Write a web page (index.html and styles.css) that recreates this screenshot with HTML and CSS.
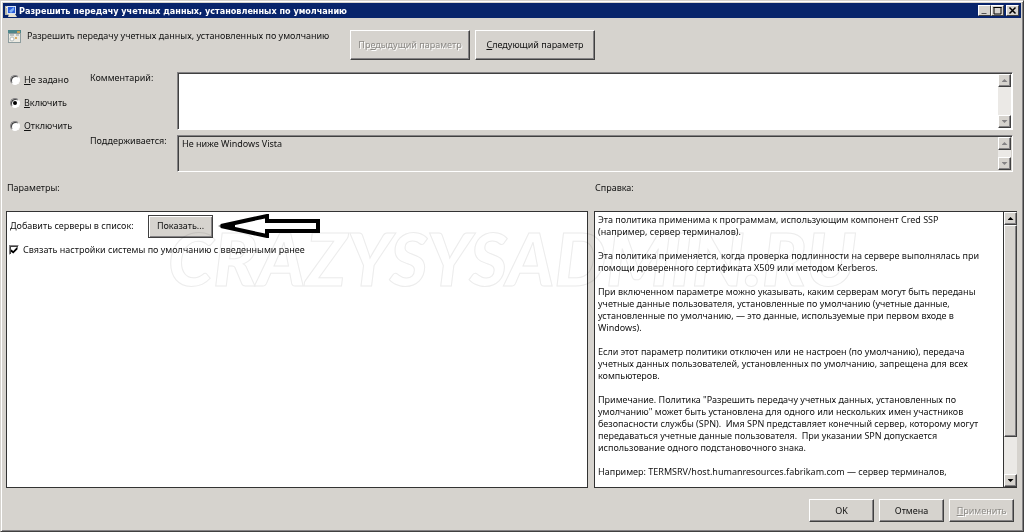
FILE: index.html
```
<!DOCTYPE html>
<html lang="ru">
<head>
    <meta charset="UTF-8">
    <meta name="viewport" content="width=device-width, initial-scale=1.0">
    <title>Разрешить передачу учетных данных, установленных по умолчанию</title>
    <link rel="stylesheet" href="styles.css">
</head>
<body>
    <div class="window">
        <header class="title-bar">
            <svg class="title-icon" viewBox="0 0 12 12" aria-hidden="true">
                <rect x="0" y="1" width="4" height="9" fill="#b9b7a8"/>
                <rect x="1" y="2" width="2" height="1" fill="#f4f2e4"/>
                <rect x="2" y="1" width="9" height="8" fill="#d8e4f4"/>
                <rect x="3" y="2" width="7" height="6" fill="#2a5bd8"/>
                <path d="M4 6 9 2v3L6 8z" fill="#7fb0f5"/>
                <path d="M4 9h6l2 3H3z" fill="#e6e2d2"/>
            </svg>
            <h1 class="title-text">Разрешить передачу учетных данных, установленных по умолчанию</h1>
            <div class="title-buttons">
                <button class="title-btn" aria-label="Свернуть"><svg viewBox="0 0 10 9"><path d="M2 7.500h5" stroke="#555"/></svg></button>
                <button class="title-btn" aria-label="Развернуть"><svg viewBox="0 0 10 9"><path d="M1 1.500h8M1.500 1v7h7V1" fill="none" stroke="#000"/></svg></button>
                <button class="title-btn close" aria-label="Закрыть"><svg viewBox="0 0 10 9"><path d="M2 1.500l6 6M8 1.500l-6 6" stroke="#000" stroke-width="1.500"/></svg></button>
            </div>
        </header>

        <section class="policy-head">
            <svg class="policy-icon" viewBox="0 0 13 13" aria-hidden="true">
                <rect x="0" y="0" width="13" height="13" fill="#8d9c9e"/>
                <rect x="0" y="0" width="13" height="3" fill="#4d868a"/>
                <rect x="9" y="1" width="3" height="2" fill="#c8a45c"/>
                <rect x="1" y="4" width="11" height="8" fill="#eceae2"/>
                <path d="M2 5h4M8 5h3" stroke="#8b9aa0"/>
                <circle cx="4" cy="9" r="2" fill="#fff" stroke="#b5bcbc"/>
                <circle cx="8" cy="8" r="1" fill="#d59a3c"/>
            </svg>
            <p class="policy-name">Разрешить передачу учетных данных, установленных по умолчанию</p>
            <button class="btn btn-nav" disabled>Пр<u>е</u>дыдущий параметр</button>
            <button class="btn btn-nav"><u>С</u>ледующий параметр</button>
        </section>

        <section class="policy-state">
            <div class="radios">
                <label class="option"><input type="radio" name="state"><span><u>Н</u>е задано</span></label>
                <label class="option"><input type="radio" name="state" checked><span><u>В</u>ключить</span></label>
                <label class="option"><input type="radio" name="state"><span><u>О</u>тключить</span></label>
            </div>
            <div class="fields">
                <label for="comment">Комментарий:</label>
                <div class="field comment">
                    <textarea id="comment"></textarea>
                    <div class="scroll off">
                        <button class="scroll-btn" aria-label="Вверх"><span class="up"></span></button>
                        <button class="scroll-btn" aria-label="Вниз"><span class="down"></span></button>
                    </div>
                </div>
                <label for="supported">Поддерживается:</label>
                <div class="field supported">
                    <textarea id="supported" readonly>Не ниже Windows Vista</textarea>
                    <div class="scroll off">
                        <button class="scroll-btn" aria-label="Вверх"><span class="up"></span></button>
                        <button class="scroll-btn" aria-label="Вниз"><span class="down"></span></button>
                    </div>
                </div>
            </div>
        </section>

        <main class="panels">
            <h2 class="panel-title">Параметры:</h2>
            <h2 class="panel-title">Справка:</h2>
            <section class="panel params">
                <div class="param-row">
                    <span>Добавить серверы в список:</span>
                    <button class="btn btn-show">Показать...</button>
                    <svg class="arrow" viewBox="0 0 104 24" aria-hidden="true">
                        <path d="M4 12 50 2v5h51v10H50v5z" fill="#fff" stroke="#000" stroke-width="4"/>
                        <path d="M1 12 18 8v8z"/>
                    </svg>
                </div>
                <label class="option"><input type="checkbox" checked><span>Связать настройки системы по умолчанию с введенными ранее</span></label>
            </section>
            <section class="panel help">
                <div class="help-text">
                    <p>Эта политика применима к программам, использующим компонент Cred SSP<br>(например, сервер терминалов).</p>
                    <p>Эта политика применяется, когда проверка подлинности на сервере выполнялась при<br>помощи доверенного сертификата X509 или методом Kerberos.</p>
                    <p>При включенном параметре можно указывать, каким серверам могут быть переданы<br>учетные данные пользователя, установленные по умолчанию (учетные данные,<br>установленные по умолчанию, — это данные, используемые при первом входе в<br>Windows).</p>
                    <p>Если этот параметр политики отключен или не настроен (по умолчанию), передача<br>учетных данных пользователей, установленных по умолчанию, запрещена для всех<br>компьютеров.</p>
                    <p>Примечание. Политика "Разрешить передачу учетных данных, установленных по<br>умолчанию" может быть установлена для одного или нескольких имен участников<br>безопасности службы (SPN).&nbsp; Имя SPN представляет конечный сервер, которому могут<br>передаваться учетные данные пользователя.&nbsp; При указании SPN допускается<br>использование одного подстановочного знака.</p>
                    <p>Например: TERMSRV/host.humanresources.fabrikam.com — сервер терминалов,</p>
                </div>
                <div class="scroll">
                    <button class="scroll-btn" aria-label="Вверх"><span class="up"></span></button>
                    <div class="thumb"></div>
                    <button class="scroll-btn" aria-label="Вниз"><span class="down"></span></button>
                </div>
            </section>
            <div class="watermark" aria-hidden="true">CRAZYSYSADMIN.RU</div>
        </main>

        <footer class="actions">
            <button class="btn">OK</button>
            <button class="btn">Отмена</button>
            <button class="btn" disabled><u>П</u>рименить</button>
        </footer>
    </div>
</body>
</html>
```
FILE: styles.css
```
* {
    box-sizing: border-box;
}

body {
    margin: 0;
    background: #d6d3ce;
    color: #111;
    font: 9px/12px "Noto Sans", "Open Sans", sans-serif;
}

h1, h2, p {
    margin: 0;
    font-size: inherit;
    font-weight: normal;
}

button, textarea, input {
    margin: 0;
    font: inherit;
    color: inherit;
}

.window {
    display: flex;
    flex-direction: column;
    min-height: 100vh;
    padding: 1px;
    border: 1px solid;
    border-color: #d6d3ce #404040 #404040 #d6d3ce;
    box-shadow: inset 1px 1px #fff, inset -1px -1px #848284;
}

/* Заголовок окна */
.title-bar {
    display: flex;
    align-items: center;
    height: 15px;
    margin: 1px 1px 0;
    padding: 0 2px;
    background: #08246b;
    color: #fff;
}

.title-icon {
    width: 12px;
    height: 12px;
    margin-right: 2px;
}

.title-text {
    flex: 1;
    font-family: "DejaVu Sans Condensed", "DejaVu Sans", sans-serif;
    font-weight: bold;
}

.title-buttons {
    display: flex;
}

.title-btn {
    width: 13px;
    height: 11px;
    padding: 0;
    display: flex;
    background: #d6d3ce;
    border: 1px solid;
    border-color: #fff #404040 #404040 #fff;
}

.title-btn svg {
    width: 100%;
    height: 100%;
}

.title-btn.close {
    margin-left: 2px;
}

/* Кнопки */
.btn {
    width: 65px;
    height: 23px;
    padding: 0;
    background: #d6d3ce;
    border: 1px solid;
    border-color: #fff #404040 #404040 #fff;
    box-shadow: inset -1px -1px #848284;
}

.btn:disabled {
    color: #8c8a86;
    text-shadow: 1px 1px #fff;
}

.btn-nav {
    width: 120px;
    height: 30px;
    margin-right: 5px;
}

.btn-show {
    border-color: #404040;
    box-shadow: inset 1px 1px #fff, inset -1px -1px #848284;
}

.policy-head {
    display: flex;
    align-items: flex-start;
    padding: 12px 6px;
}

.policy-icon {
    width: 13px;
    height: 13px;
    margin-right: 6px;
}

.policy-name {
    width: 323px;
    white-space: nowrap;
}

/* Состояние политики */
.policy-state {
    display: flex;
    padding: 0 9px 0 8px;
}

.radios {
    display: flex;
    flex-direction: column;
    gap: 11px;
    width: 80px;
    padding-top: 2px;
}

.option {
    display: flex;
    align-items: center;
    gap: 4px;
}

.option input {
    appearance: none;
    display: grid;
    place-items: center;
    width: 10px;
    height: 10px;
    background: #fff;
    border: 1px solid;
    border-color: #848284 #fff #fff #848284;
    box-shadow: inset 1px 1px #404040;
}

.option input[type="radio"] {
    border-radius: 50%;
}

.option input[type="radio"]:checked::after {
    content: "";
    width: 4px;
    height: 4px;
    border-radius: 50%;
    background: #000;
}

.option input[type="checkbox"]:checked::after {
    content: "";
    width: 7px;
    height: 7px;
    background: #000;
    clip-path: polygon(0 35%, 40% 65%, 100% 0, 100% 40%, 40% 100%, 0 70%);
}

.fields {
    flex: 1;
    display: grid;
    grid-template-columns: 87px 1fr;
    gap: 5px 0;
}

.field {
    display: flex;
    border: 1px solid;
    border-color: #848284 #fff #fff #848284;
    box-shadow: inset 1px 1px #404040;
    padding: 1px;
}

.comment {
    height: 58px;
    background: #fff;
}

.supported {
    height: 37px;
}

.field textarea {
    flex: 1;
    padding: 1px 3px;
    border: 0;
    background: none;
    resize: none;
    overflow: hidden;
}

/* Полосы прокрутки */
.scroll {
    display: flex;
    flex-direction: column;
    justify-content: space-between;
    width: 13px;
    background: #ebe9e6;
}

.scroll-btn {
    display: grid;
    place-items: center;
    width: 13px;
    height: 13px;
    padding: 0;
    background: #d6d3ce;
    border: 1px solid;
    border-color: #fff #404040 #404040 #fff;
    box-shadow: inset -1px -1px #848284;
}

.up, .down {
    width: 6px;
    height: 3px;
    background: #000;
    clip-path: polygon(50% 0, 100% 100%, 0 100%);
}

.down {
    clip-path: polygon(0 0, 100% 0, 50% 100%);
}

.off .up, .off .down {
    background: #848284;
}

.thumb {
    flex: 0 0 212px;
    margin-bottom: auto;
    background: #d6d3ce;
    border: 1px solid;
    border-color: #fff #404040 #404040 #fff;
    box-shadow: inset -1px -1px #848284;
}

/* Панели */
.panels {
    position: relative;
    flex: 1;
    display: grid;
    grid-template-columns: 582fr 423fr;
    grid-template-rows: 29px 1fr;
    column-gap: 6px;
    padding: 10px 5px 0 4px;
}

.panel-title {
    padding-left: 1px;
}

.panel {
    background: #fff;
    border: 1px solid #333;
}

.params {
    padding: 2px;
}

.param-row {
    display: flex;
    align-items: center;
    margin-bottom: 6px;
}

.param-row span {
    width: 139px;
    padding-left: 1px;
}

.arrow {
    width: 104px;
    height: 24px;
    margin-left: 4px;
}

.help {
    display: flex;
    border-right: 0;
}

.help-text {
    flex: 1;
    padding: 2px 3px 0;
    border-right: 1px solid #333;
    white-space: nowrap;
    overflow: hidden;
}

.help-text p + p {
    margin-top: 12px;
}

.watermark {
    position: absolute;
    top: 50px;
    left: 166px;
    color: #fff;
    mix-blend-mode: multiply;
    -webkit-text-stroke: 1px #ececec;
    font: italic 900 73px/72px Lato, sans-serif;
    pointer-events: none;
}

.actions {
    display: flex;
    justify-content: flex-end;
    gap: 5px;
    padding: 11px 8px 8px;
}
```
